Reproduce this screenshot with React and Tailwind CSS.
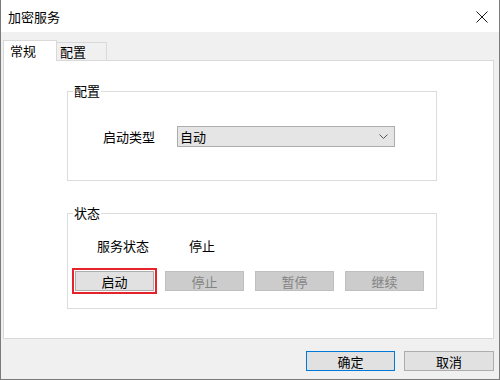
import React from "react";

const font = { fontFamily: '"Noto Sans CJK SC", "Noto Sans", sans-serif' };

function Btn({ children, disabled, className = "" }) {
  return (
    <div
      className={
        "h-[20px] flex items-center justify-center text-[13px] leading-none border " +
        (disabled
          ? "bg-[#cccccc] border-[#bfbfbf] text-[#838383] "
          : "bg-[#e1e1e1] border-[#adadad] text-[#000000] ") +
        className
      }
    >
      {children}
    </div>
  );
}

function Group({ label, className = "", children }) {
  return (
    <div className={"relative border border-[#dcdcdc] " + className}>
      <span className="absolute left-[5px] top-[-9px] bg-white px-[1px] text-[13px] leading-[16px] text-black">
        {label}
      </span>
      {children}
    </div>
  );
}

export default function App() {
  return (
    <div
      style={font}
      className="w-[500px] h-[380px] flex flex-col border-x border-b border-[#7a7a7a] bg-[#f0f0f0] text-black"
    >
      {/* title bar */}
      <div className="h-[32px] bg-white flex items-center justify-between pl-[7px] pr-[11px]">
        <span className="text-[13px] leading-none">加密服务</span>
        <svg width="12" height="12" viewBox="0 0 12 12" className="mt-[1px]">
          <path d="M0.5 0.5 L11.5 11.5 M11.5 0.5 L0.5 11.5" stroke="#1a1a1a" strokeWidth="1" />
        </svg>
      </div>

      {/* body */}
      <div className="flex flex-col pl-[2px] pr-[5px] pt-[8px]">
        {/* tabs */}
        <div className="flex items-end h-[20px]">
          <div className="relative z-10 w-[54px] h-[21px] mb-[-1px] bg-white border border-b-0 border-[#d9d9d9] flex items-start pl-[6px] pt-[2px] text-[13px] leading-[16px]">
            常规
          </div>
          <div className="w-[50px] h-[18px] bg-[#f0f0f0] border border-l-0 border-b-0 border-[#d9d9d9] flex items-start pl-[3px] pt-[1px] text-[13px] leading-[16px]">
            配置
          </div>
        </div>

        {/* panel */}
        <div className="h-[279px] bg-white border border-[#d9d9d9] pl-[63px] pt-[30px]">
          <Group label="配置" className="w-[370px] h-[90px] flex items-center pl-[35px] pt-[1px]">
            <span className="text-[13px] leading-none w-[74px]">启动类型</span>
            <div className="w-[218px] h-[21px] bg-[#e5e5e5] border border-[#adadad] flex items-center justify-between pl-[2px] pr-[6px] text-[13px] leading-none">
              <span>自动</span>
              <svg width="9" height="5" viewBox="0 0 9 5">
                <path d="M0.5 0.5 L4.5 4.5 L8.5 0.5" fill="none" stroke="#555" strokeWidth="1" />
              </svg>
            </div>
          </Group>

          <Group label="状态" className="w-[370px] h-[96px] mt-[32px] flex flex-col pl-[7px]">
            <div className="flex items-center h-[16px] mt-[23px] pl-[22px] text-[13px] leading-none">
              <span className="w-[92px]">服务状态</span>
              <span>停止</span>
            </div>
            <div className="flex gap-[11px] mt-[18px]">
              <Btn className="w-[79px] outline-2 outline-[#e8222a] outline-offset-1">启动</Btn>
              <Btn disabled className="w-[79px]">停止</Btn>
              <Btn disabled className="w-[79px]">暂停</Btn>
              <Btn disabled className="w-[79px]">继续</Btn>
            </div>
          </Group>
        </div>

        {/* footer */}
        <div className="flex justify-end gap-[9px] pt-[12px] pr-[0px]">
          <Btn className="w-[89px] !border-[#0078d7]">确定</Btn>
          <Btn className="w-[90px]">取消</Btn>
        </div>
      </div>
    </div>
  );
}
